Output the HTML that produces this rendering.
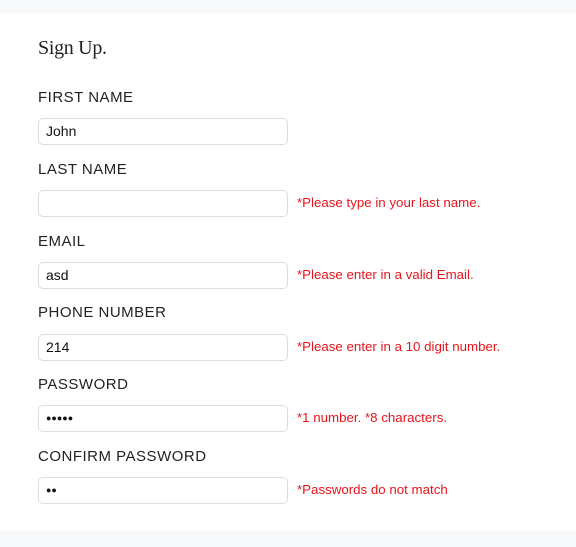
<!DOCTYPE html><html><head><style>
body{margin:0;background:#f7f8fa;width:576px;height:547px;position:relative;font-family:"Liberation Sans",sans-serif;overflow:hidden}
.card{position:absolute;left:0;top:13px;width:576px;height:517px;background:#fff}
h1{position:absolute;left:38px;top:37px;margin:0;font:normal 20px "Liberation Serif",serif;color:#222;letter-spacing:-0.3px}
.l{position:absolute;left:38px;font-size:15px;color:#222;letter-spacing:0.5px}
.i{position:absolute;left:38px;height:25px;border:1px solid #ddd;border-radius:5px;box-sizing:content-box;font-size:14px;line-height:25px;padding-left:7px;width:241px;color:#111}
.e{position:absolute;left:297px;font-size:13.3px;color:#e8141c}
</style></head><body>
<div class="card"></div>
<h1>Sign Up.</h1>
<div class="l" style="top:89px">FIRST NAME</div>
<div class="i" style="top:118px">John</div>
<div class="l" style="top:161px">LAST NAME</div>
<div class="i" style="top:190px"></div>
<div class="e" style="top:195px">*Please type in your last name.</div>
<div class="l" style="top:233px">EMAIL</div>
<div class="i" style="top:262px">asd</div>
<div class="e" style="top:267px">*Please enter in a valid Email.</div>
<div class="l" style="top:304px">PHONE NUMBER</div>
<div class="i" style="top:334px">214</div>
<div class="e" style="top:339px">*Please enter in a 10 digit number.</div>
<div class="l" style="top:376px">PASSWORD</div>
<div class="i" style="top:405px;font-size:9px">●●●●●</div>
<div class="e" style="top:410px">*1 number. *8 characters.</div>
<div class="l" style="top:448px">CONFIRM PASSWORD</div>
<div class="i" style="top:477px;font-size:9px">●●</div>
<div class="e" style="top:482px">*Passwords do not match</div>
</body></html>
